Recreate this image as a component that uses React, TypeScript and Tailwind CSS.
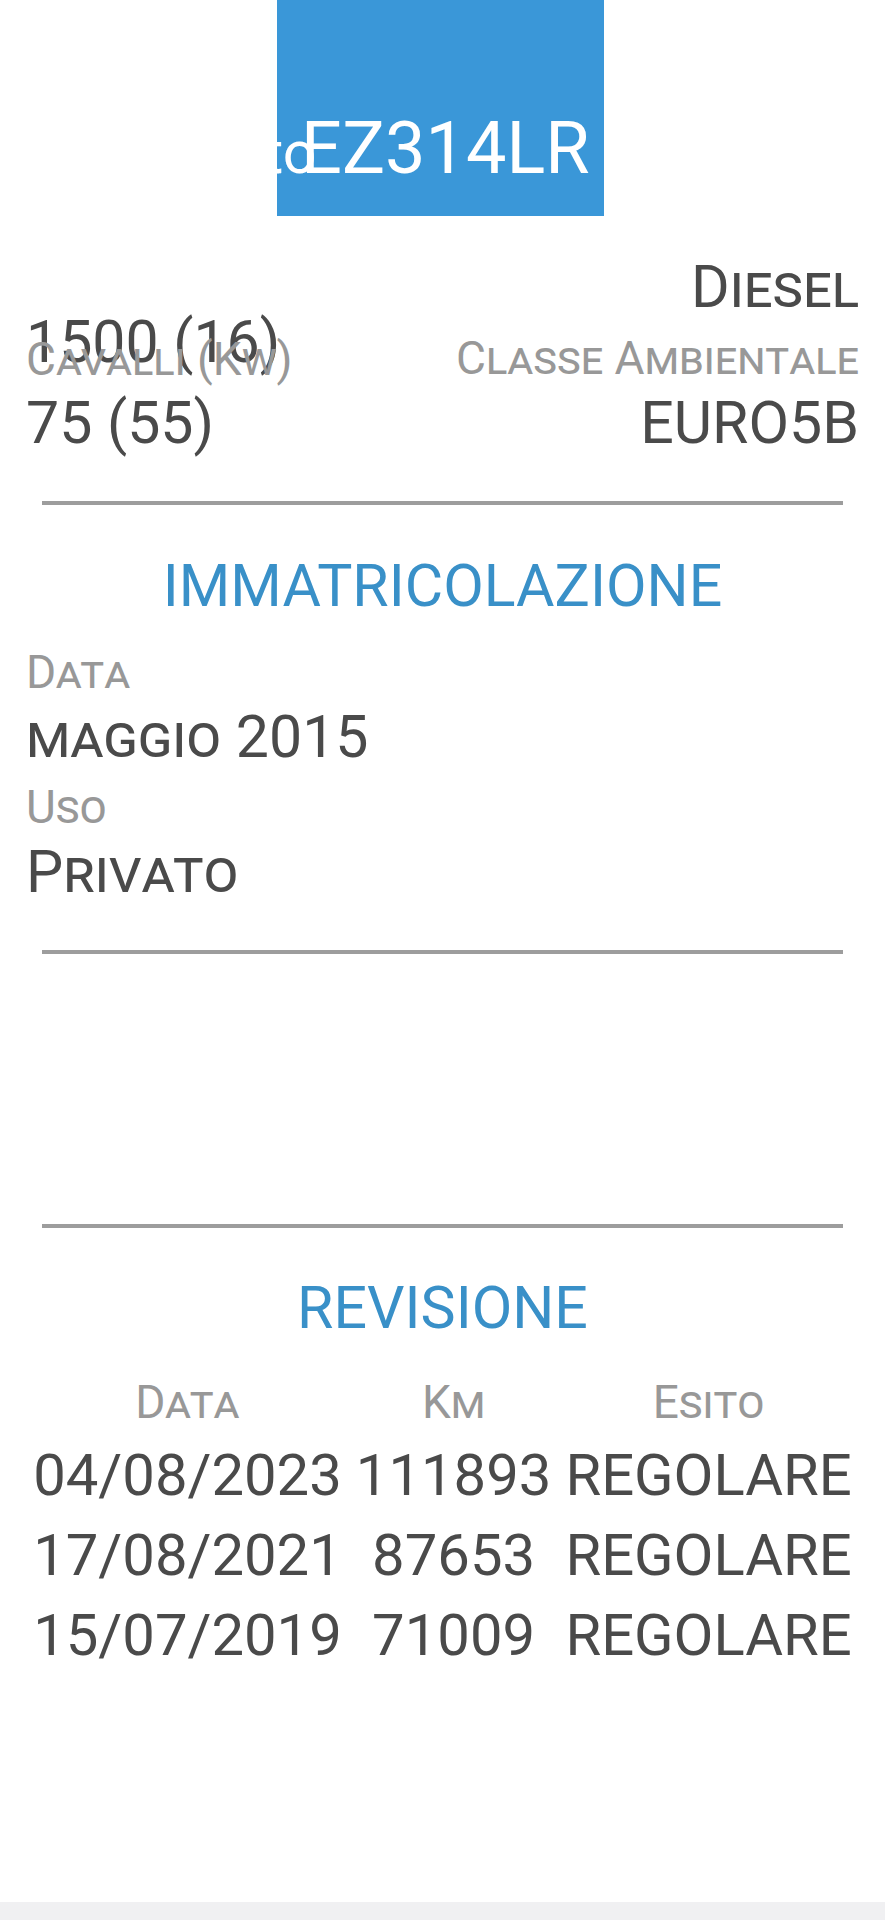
type Props = { children: React.ReactNode; className?: string }

function Label({ children, className = '' }: Props) {
  return (
    <div className={`text-[46px] leading-[62px] text-[#989898] [font-variant:small-caps] ${className}`}>
      {children}
    </div>
  )
}

function Value({ children, className = '' }: Props) {
  return (
    <div className={`text-[59px] leading-[72px] text-[#4a4a4a] [font-variant:small-caps] ${className}`}>
      {children}
    </div>
  )
}

function Divider({ className = '' }: { className?: string }) {
  return <div className={`mx-[42px] h-[4px] bg-[#9d9d9d] ${className}`} />
}

export default function App() {
  const revisioni = [
    { data: '04/08/2023', km: '111893', esito: 'REGOLARE' },
    { data: '17/08/2021', km: '87653', esito: 'REGOLARE' },
    { data: '15/07/2019', km: '71009', esito: 'REGOLARE' },
  ]

  return (
    <div className="flex h-[1920px] flex-col bg-white [font-family:Roboto,sans-serif]">
      {/* Targa */}
      <div className="relative ml-[277px] h-[216px] w-[327px] bg-[#3a97d8] text-white">
        <span className="absolute left-[-13px] top-[117px] text-[59px] leading-[72px]">to</span>
        <div className="relative pl-[24px] pt-[113px] text-[72px] leading-[72px]">EZ314LR</div>
      </div>

      {/* Motore */}
      <div className="mt-[35px] flex justify-between px-[26px]">
        <div className="flex flex-col pt-[55px]">
          <Value className="mb-[-50px]">1500 (16)</Value>
          <Label>Cavalli (Kw)</Label>
          <Value className="mt-[-3px]">75 (55)</Value>
        </div>
        <div className="flex flex-col items-end text-right">
          <Value>Diesel</Value>
          <Label className="mt-[4px]">Classe Ambientale</Label>
          <Value className="mt-[-2px]">EURO5B</Value>
        </div>
      </div>

      <Divider className="mt-[42px]" />

      {/* Immatricolazione */}
      <h2 className="mt-[45px] text-center text-[59px] leading-[72px] text-[#3990c8]">IMMATRICOLAZIONE</h2>
      <div className="flex flex-col px-[26px]">
        <Label className="mt-[19px]">Data</Label>
        <Value className="mt-[-2px]">maggio 2015</Value>
        <Label className="mt-[3px]">Uso</Label>
        <Value className="mt-[-2px]">Privato</Value>
      </div>

      <Divider className="mt-[42px]" />
      <Divider className="mt-[270px]" />

      {/* Revisione */}
      <h2 className="mt-[44px] text-center text-[59px] leading-[72px] text-[#3990c8]">REVISIONE</h2>
      <table className="mx-auto mt-[25px] border-collapse">
        <thead>
          <tr className="text-[46px] leading-[66px] text-[#989898] [font-variant:small-caps]">
            <th className="px-[7px] font-normal">Data</th>
            <th className="px-[7px] font-normal">Km</th>
            <th className="px-[7px] font-normal">Esito</th>
          </tr>
        </thead>
        <tbody>
          {revisioni.map((r) => (
            <tr key={r.data} className="text-[58px] leading-[80px] text-[#4a4a4a]">
              <td className="px-[7px] text-center">{r.data}</td>
              <td className="px-[7px] text-center">{r.km}</td>
              <td className="px-[7px] text-center">{r.esito}</td>
            </tr>
          ))}
        </tbody>
      </table>

      <div className="flex-1" />
      <div className="h-[18px] bg-[#f0f0f2]" />
    </div>
  )
}
